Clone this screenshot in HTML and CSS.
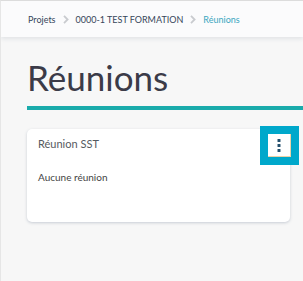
FILE: index.html
```html
<!DOCTYPE html>
<html>
    <head>
        <title>Réunions</title>
        <link rel="stylesheet" href="styles.css">
    </head>
    <body>
        <div class="topbar">
            <span class="crumb">Projets</span>
            <svg class="sep" width="6" height="9" viewBox="0 0 6 9"><path d="M1 0.8 L4.6 4.5 L1 8.2" fill="none" stroke="#c9cbcf" stroke-width="1.8"/></svg>
            <span class="crumb">0000-1 TEST FORMATION</span>
            <svg class="sep" width="6" height="9" viewBox="0 0 6 9"><path d="M1 0.8 L4.6 4.5 L1 8.2" fill="none" stroke="#c9cbcf" stroke-width="1.8"/></svg>
            <span class="crumb current">Réunions</span>
        </div>

        <div class="page">
            <h1 class="title">Réunions</h1>

            <div class="card">
                <div class="cardHead">
                    <span class="cardTitle">Réunion SST</span>
                    <button class="menuBtn">
                        <svg width="4" height="13" viewBox="0 0 4 13">
                            <rect x="0.5" y="0" width="3" height="3" rx="0.6" fill="#24506e"/>
                            <rect x="0.5" y="5" width="3" height="3" rx="0.6" fill="#24506e"/>
                            <rect x="0.5" y="10" width="3" height="3" rx="0.6" fill="#24506e"/>
                        </svg>
                    </button>
                </div>
                <div class="empty">Aucune réunion</div>
            </div>
        </div>
    </body>
</html>
```

FILE: styles.css
```css
body {
    margin: 0;
    font-family: Lato, "Liberation Sans", sans-serif;
    background: #f7f7f7;
    border-top: 1px solid #dcdcdc;
    border-left: 1px solid #e6e6e6;
    height: 280px;
    overflow: hidden;
}
.topbar {
    height: 36px;
    display: flex;
    align-items: center;
    padding-left: 27px;
    background: #fbfbfc;
    box-shadow: 0 2px 4px rgba(40, 60, 90, 0.1);
    font-size: 9px;
}
.crumb {
    color: #37465a;
}
.current {
    color: #3aa6bf;
}
.sep {
    margin: 0 7px 0 7px;
}
.page {
    padding-left: 26px;
}
.title {
    margin: 19px 0 0;
    font-size: 35px;
    line-height: 42px;
    font-weight: normal;
    color: #3b3b48;
    padding-bottom: 8px;
    border-bottom: 4px solid #1aabab;
}
.card {
    margin: 19px 13px 0 0;
    height: 93px;
    background: #fff;
    border-radius: 5px;
    box-shadow: 0 1px 3px rgba(60, 80, 110, 0.25);
    padding: 5px 0 0 11px;
    box-sizing: border-box;
}
.cardHead {
    display: flex;
    justify-content: space-between;
    align-items: flex-start;
}
.cardTitle {
    margin-top: 3px;
    font-size: 11px;
    line-height: 14px;
    color: #555a60;
}
.menuBtn {
    width: 23px;
    height: 23px;
    margin-right: -1px;
    padding: 0;
    display: flex;
    align-items: center;
    justify-content: center;
    background: #fff;
    border: 0;
    border-right: 1px solid #edd3a8;
    border-bottom: 1px solid #edd3a8;
    outline: 8px solid #00a8cb;
}
.empty {
    margin-top: 14px;
    font-size: 10px;
    line-height: 13px;
    color: #444;
}
```
